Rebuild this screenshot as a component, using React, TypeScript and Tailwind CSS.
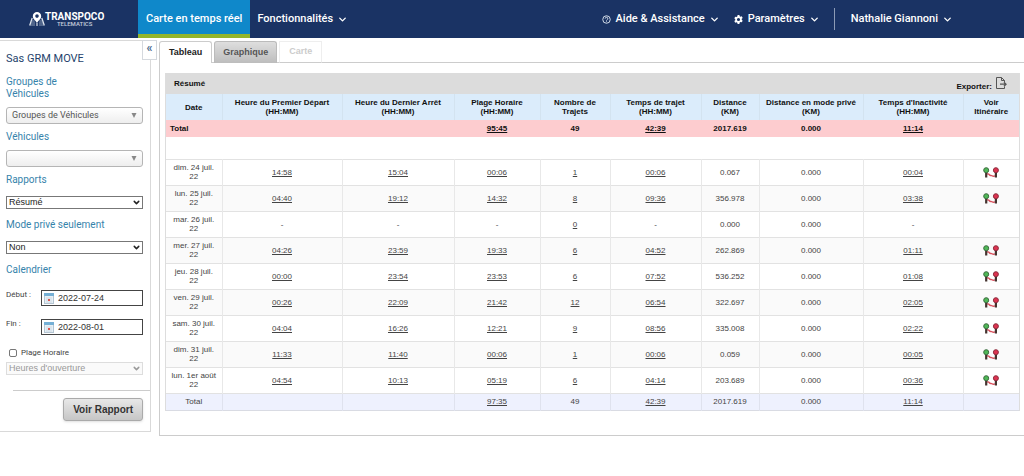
import { ReactNode, SelectHTMLAttributes, useState } from "react";
import { ChevronDown } from "lucide-react";

interface ReportRow {
  date: string;
  first: string;
  last: string;
  range: string;
  trips: string;
  driving: string;
  distance: string;
  privateKm: string;
  idle: string;
}

const columns = [
  { title: "Date", unit: "", width: "w-[56px]" },
  { title: "Heure du Premier Départ", unit: "(HH:MM)", width: "w-[120px]" },
  { title: "Heure du Dernier Arrêt", unit: "(HH:MM)", width: "w-[112px]" },
  { title: "Plage Horaire", unit: "(HH:MM)", width: "w-[86px]" },
  { title: "Nombre de", unit: "Trajets", width: "w-[70px]" },
  { title: "Temps de trajet", unit: "(HH:MM)", width: "w-[91px]" },
  { title: "Distance", unit: "(KM)", width: "w-[58px]" },
  { title: "Distance en mode privé", unit: "(KM)", width: "w-[104px]" },
  { title: "Temps d'Inactivité", unit: "(HH:MM)", width: "w-[100px]" },
  { title: "Voir", unit: "Itinéraire", width: "w-[56px]" },
];

const rows: ReportRow[] = [
  { date: "dim. 24 juil. 22", first: "14:58", last: "15:04", range: "00:06", trips: "1", driving: "00:06", distance: "0.067", privateKm: "0.000", idle: "00:04" },
  { date: "lun. 25 juil. 22", first: "04:40", last: "19:12", range: "14:32", trips: "8", driving: "09:36", distance: "356.978", privateKm: "0.000", idle: "03:38" },
  { date: "mar. 26 juil. 22", first: "-", last: "-", range: "-", trips: "0", driving: "-", distance: "0.000", privateKm: "0.000", idle: "-" },
  { date: "mer. 27 juil. 22", first: "04:26", last: "23:59", range: "19:33", trips: "6", driving: "04:52", distance: "262.869", privateKm: "0.000", idle: "01:11" },
  { date: "jeu. 28 juil. 22", first: "00:00", last: "23:54", range: "23:53", trips: "6", driving: "07:52", distance: "536.252", privateKm: "0.000", idle: "01:08" },
  { date: "ven. 29 juil. 22", first: "00:26", last: "22:09", range: "21:42", trips: "12", driving: "06:54", distance: "322.697", privateKm: "0.000", idle: "02:05" },
  { date: "sam. 30 juil. 22", first: "04:04", last: "16:26", range: "12:21", trips: "9", driving: "08:56", distance: "335.008", privateKm: "0.000", idle: "02:22" },
  { date: "dim. 31 juil. 22", first: "11:33", last: "11:40", range: "00:06", trips: "1", driving: "00:06", distance: "0.059", privateKm: "0.000", idle: "00:05" },
  { date: "lun. 1er août 22", first: "04:54", last: "10:13", range: "05:19", trips: "6", driving: "04:14", distance: "203.689", privateKm: "0.000", idle: "00:36" },
];

function Value({ children }: { children: string }) {
  if (children === "-") return <>-</>;
  return (
    <a href="#detail" className="underline">
      {children}
    </a>
  );
}

function RouteIcon() {
  return (
    <svg width="16" height="11" viewBox="0 0 16 11" className="mx-auto block" aria-hidden="true">
      <path d="M4 7c1.200-.4 2 .1 2.600 1s1.600 .1 2.400 .7 1.800 .8 3 .2" fill="none" stroke="#d9505d" strokeWidth="1.400" />
      <path d="M3.200 5.500v5M12.900 5.500v5" stroke="#44332f" strokeWidth="2.200" />
      <circle cx="3.200" cy="3.200" r="2.500" fill="#4fb857" stroke="#3c6b3f" strokeWidth="1" />
      <circle cx="12.900" cy="3.200" r="2.500" fill="#dc3350" stroke="#8c2b3b" strokeWidth="1" />
    </svg>
  );
}

function CalendarIcon() {
  return (
    <svg width="10" height="11" viewBox="0 0 10 11" className="shrink-0" aria-hidden="true">
      <rect x="0.500" y="0.500" width="9" height="10" fill="#e6eff5" stroke="#b4c5d2" />
      <path d="M0 0h10v3H0z" fill="#74afd5" />
      <path d="M2 5h6M2 7h6M2 9h6" stroke="#c9d6df" strokeWidth="0.800" />
      <path d="M4 6h2v2H4z" fill="#e0544c" />
    </svg>
  );
}

function Logo() {
  return (
    <a href="#accueil" className="flex items-center text-white" aria-label="Transpoco Telematics">
      <svg width="16" height="14" viewBox="0 0 16 14" aria-hidden="true">
        <path d="M3.200 6 .7 13.500M12.800 6l2.500 7.500" stroke="#dfe5ee" strokeWidth="1.300" fill="none" />
        <path d="M2.500 9h3.200M2 11h4M1.300 13h4.700M10.300 9h3.200M10 11h4M10 13h4.700" stroke="#b9c4d6" strokeWidth="0.700" />
        <path d="M8 11v3" stroke="#fff" strokeWidth="1" />
        <path
          d="M8 0a4.200 4.200 0 0 0-4.200 4.200C3.800 7 6.800 8.500 8 11c1.200-2.500 4.200-4 4.200-6.800A4.200 4.200 0 0 0 8 0Zm0 2.300a1.800 1.800 0 1 1 0 3.600 1.800 1.800 0 0 1 0-3.600Z"
          fill="#fff"
          fillRule="evenodd"
        />
      </svg>
      <span className="flex flex-col items-center">
        <span className="text-[10px] leading-[9px] font-bold">TRANSPOCO</span>
        <span className="text-[6px] leading-[5px] text-[#c5cedd]">TELEMATICS</span>
      </span>
    </a>
  );
}

function NavMenu({ icon, children }: { icon?: ReactNode; children: string }) {
  return (
    <button type="button" className="flex items-center whitespace-nowrap">
      {icon}
      {children}
      <ChevronDown size={11} strokeWidth={3} className="ml-1" />
    </button>
  );
}

function Header() {
  return (
    <header className="flex h-[38px] items-stretch bg-[#1a3364] text-[11px] font-medium text-white">
      <div className="flex w-[138px] items-center pl-[29px]">
        <Logo />
      </div>
      <nav className="flex flex-1 items-stretch">
        <a
          href="#carte"
          className="flex items-center border-b-4 border-[#93b52b] bg-[#0f88ca] px-2 pt-1 whitespace-nowrap"
        >
          Carte en temps réel
        </a>
        <div className="flex pl-[7px]">
          <NavMenu>Fonctionnalités</NavMenu>
        </div>
        <div className="ml-auto flex items-center gap-[14px] pr-[71px]">
          <NavMenu
            icon={
              <svg width="9" height="9" viewBox="0 0 24 24" fill="none" stroke="#dce4ef" strokeWidth="2.500" className="mr-[5px]" aria-hidden="true">
                <circle cx="12" cy="12" r="10" />
                <path d="M8.500 9.500a3.500 3.500 0 1 1 5 3.200c-1 .6-1.500 1-1.500 2.300M12 17v2" />
              </svg>
            }
          >
            Aide & Assistance
          </NavMenu>
          <NavMenu
            icon={
              <svg width="9" height="9" viewBox="0 0 20 20" className="mr-[5px]" aria-hidden="true">
                <path
                  d="M8 0h4l.6 2.800 2 1.100 2.700-.9 2 3.500-2.100 1.900v2.400l2.100 1.900-2 3.500-2.700-.9-2 1.100L12 20H8l-.6-2.800-2-1.100-2.700.9-2-3.500 2.100-1.900V9.200L.7 7.300l2-3.500 2.700.9 2-1.100L8 0Zm2 6.500a3.500 3.500 0 1 0 0 7 3.500 3.500 0 0 0 0-7Z"
                  fill="#fff"
                  fillRule="evenodd"
                />
              </svg>
            }
          >
            Paramètres
          </NavMenu>
          <div className="flex items-center gap-4">
            <span className="h-[22px] w-px bg-[#8c9bb5]" />
            <NavMenu>Nathalie Giannoni</NavMenu>
          </div>
        </div>
      </nav>
    </header>
  );
}

// Rounded gradient drop-down with a small solid arrow
function FancySelect(props: SelectHTMLAttributes<HTMLSelectElement>) {
  return (
    <div className="relative mt-[7px]">
      <select
        {...props}
        className="block h-[17px] w-full appearance-none rounded-[3px] border border-[#b5b5b5] bg-linear-to-b from-white to-[#eeeeee] pl-[5px] text-[9px] leading-[15px] text-[#555]"
      />
      <svg width="6" height="5" viewBox="0 0 6 5" className="pointer-events-none absolute top-[6px] right-[6px]" aria-hidden="true">
        <path d="M.5 0h5L3 5z" fill="#888" />
      </svg>
    </div>
  );
}

function PlainSelect(props: SelectHTMLAttributes<HTMLSelectElement>) {
  return (
    <div className={props.disabled ? "relative text-[#999]" : "relative text-[#222]"}>
      <select
        {...props}
        className="block h-[13px] w-full appearance-none border border-[#777] bg-white pl-[2px] font-['Liberation_Sans',Arial,sans-serif] text-[9px] leading-[11px] disabled:border-[#ddd] disabled:bg-[#fafafa]"
      />
      <ChevronDown size={9} strokeWidth={4} className="pointer-events-none absolute top-[2px] right-[2px]" />
    </div>
  );
}

function FieldLabel({ htmlFor, children }: { htmlFor: string; children: ReactNode }) {
  return (
    <label htmlFor={htmlFor} className="block text-[10px] leading-3 text-[#3683ab]">
      {children}
    </label>
  );
}

function DateField({ id, label, initial }: { id: string; label: string; initial: string }) {
  const [value, setValue] = useState(initial);
  return (
    <div className="flex items-start">
      <label htmlFor={id} className="w-[35px] shrink-0 text-[8px] leading-[10px] text-[#444]">
        {label}
      </label>
      <div className="flex h-4 min-w-0 flex-1 items-center gap-1 border border-[#444] bg-white px-[2px]">
        <CalendarIcon />
        <input
          id={id}
          value={value}
          onChange={(e) => setValue(e.target.value)}
          className="w-full min-w-0 font-['Liberation_Sans',Arial,sans-serif] text-[9px] leading-[14px] text-[#333] outline-none"
        />
      </div>
    </div>
  );
}

function Sidebar() {
  return (
    <aside className="relative w-[151px] shrink-0 self-start border-t border-r border-b border-[#d9d9d9] pb-[10px]">
      <button
        type="button"
        aria-label="Réduire le panneau"
        className="absolute -top-px -right-[7px] flex h-5 w-[15px] items-center justify-center border border-[#d5d9de] bg-white pb-1 text-[12px] leading-none font-bold text-[#4b6b8f]"
      >
        «
      </button>
      <div className="pt-3 pr-[7px] pl-[6px]">
        <h1 className="text-[11px] leading-3 text-[#26436c]">Sas GRM MOVE</h1>

        <div className="mt-[11px]">
          <FieldLabel htmlFor="groups">
            Groupes de
            <br />
            Véhicules
          </FieldLabel>
          <FancySelect id="groups">
            <option>Groupes de Véhicules</option>
          </FancySelect>
        </div>

        <div className="mt-[7px]">
          <FieldLabel htmlFor="vehicles">Véhicules</FieldLabel>
          <FancySelect id="vehicles">
            <option></option>
          </FancySelect>
        </div>

        <div className="mt-[7px] flex flex-col gap-[10px]">
          <FieldLabel htmlFor="report">Rapports</FieldLabel>
          <PlainSelect id="report">
            <option>Résumé</option>
          </PlainSelect>
          <FieldLabel htmlFor="private">Mode privé seulement</FieldLabel>
          <PlainSelect id="private">
            <option>Non</option>
            <option>Oui</option>
          </PlainSelect>
          <h2 className="text-[10px] leading-3 text-[#3683ab]">Calendrier</h2>
        </div>

        <div className="mt-[14px] flex flex-col gap-[13px]">
          <DateField id="start" label="Début :" initial="2022-07-24" />
          <DateField id="end" label="Fin :" initial="2022-08-01" />
        </div>

        <div className="mt-[13px] mb-1 flex items-center pl-[3px]">
          <input
            id="hours"
            type="checkbox"
            className="h-2 w-2 appearance-none rounded-[2px] border border-[#777] bg-white checked:bg-[#0f88ca]"
          />
          <label htmlFor="hours" className="pl-1 text-[8px] leading-[10px] text-[#444]">
            Plage Horaire
          </label>
        </div>
        <PlainSelect aria-label="Plage Horaire" disabled>
          <option>Heures d'ouverture</option>
        </PlainSelect>
      </div>

      <div className="mt-[15px] ml-[13px] flex justify-end border-t border-[#ccc] pt-[7px] pr-[7px]">
        <button
          type="button"
          className="h-[23px] rounded-[3px] border border-[#aaa] bg-linear-to-b from-[#e8e8e8] to-[#c6c6c6] px-[9px] font-['Liberation_Sans',Arial,sans-serif] text-[10px] font-bold text-[#333] shadow-sm"
        >
          Voir Rapport
        </button>
      </div>
    </aside>
  );
}

function Tabs() {
  return (
    <div role="tablist" className="flex h-[22px] font-['Liberation_Sans',Arial,sans-serif] text-[9px] font-bold">
      <button role="tab" aria-selected="true" className="rounded-t-[3px] border border-b-0 border-[#ccc] bg-white px-[9px] text-[#222]">
        Tableau
      </button>
      <span className="w-[2px] border-b border-[#ccc]" />
      <button
        role="tab"
        aria-selected="false"
        className="rounded-t-[3px] border border-b-0 border-[#bbb] bg-linear-to-b from-[#dedede] to-[#bdbdbd] px-2 text-[#555]"
      >
        Graphique
      </button>
      <span className="w-[2px] border-b border-[#ccc]" />
      <button role="tab" aria-selected="false" disabled className="border border-[#eee] border-b-[#ccc] px-[9px] text-[#ccc]">
        Carte
      </button>
      <span className="flex-1 border-b border-[#ccc]" />
    </div>
  );
}

function ReportTable() {
  return (
    <div className="mr-1 border-r border-l border-[#ddd]">
      <div className="flex h-[21px] items-center justify-between bg-[#dcdcdc] pr-3 pl-2 font-bold">
        <span>Résumé</span>
        <button type="button" className="flex items-end gap-1">
          Exporter:
          <svg width="11" height="12" viewBox="0 0 11 12" className="mb-[2px]" fill="none" stroke="#555" strokeWidth="1" aria-hidden="true">
            <path d="M8.500 5V3.500l-3-3h-5v11h8V9.500" />
            <path d="M5.500 .5v3h3" />
            <path d="M4 7.200h5.500M8 5.200l2 2-2 2" strokeWidth="1.300" />
          </svg>
        </button>
      </div>
      <table className="w-full table-fixed border-collapse text-center">
        <thead>
          <tr className="h-[26px] bg-[#dbecfb]">
            {columns.map((col) => (
              <th key={col.title} className={`${col.width} border-x border-[#d3e3f0] p-0 font-bold whitespace-nowrap first:border-l-0 last:border-r-0`}>
                {col.title}
                {col.unit && (
                  <>
                    <br />
                    {col.unit}
                  </>
                )}
              </th>
            ))}
          </tr>
        </thead>
        <tbody>
          <tr className="h-[17px] bg-[#fdcccf] font-bold">
            <td className="pl-1 text-left">Total</td>
            <td />
            <td />
            <td><Value>95:45</Value></td>
            <td>49</td>
            <td><Value>42:39</Value></td>
            <td>2017.619</td>
            <td>0.000</td>
            <td><Value>11:14</Value></td>
            <td />
          </tr>
          <tr className="h-[22px]">
            <td colSpan={10} />
          </tr>
          {rows.map((row) => (
            <tr
              key={row.date}
              className="h-[26px] border-y border-[#e2e2e2] text-[#444] even:bg-[#fafafa] [&>td+td]:border-l [&>td+td]:border-[#e8e8e8]"
            >
              <td className="px-[5px]">{row.date}</td>
              <td><Value>{row.first}</Value></td>
              <td><Value>{row.last}</Value></td>
              <td><Value>{row.range}</Value></td>
              <td><Value>{row.trips}</Value></td>
              <td><Value>{row.driving}</Value></td>
              <td>{row.distance}</td>
              <td>{row.privateKm}</td>
              <td><Value>{row.idle}</Value></td>
              <td>
                {row.first !== "-" && (
                  <a href="#itineraire" aria-label="Voir Itinéraire">
                    <RouteIcon />
                  </a>
                )}
              </td>
            </tr>
          ))}
        </tbody>
        <tfoot>
          <tr className="h-[17px] border-y border-[#d9dbe3] bg-[#eef1fe] text-[#444] [&>td+td]:border-l [&>td+td]:border-[#dfe2ee]">
            <td>Total</td>
            <td />
            <td />
            <td><Value>97:35</Value></td>
            <td>49</td>
            <td><Value>42:39</Value></td>
            <td>2017.619</td>
            <td>0.000</td>
            <td><Value>11:14</Value></td>
            <td />
          </tr>
        </tfoot>
      </table>
    </div>
  );
}

export default function App() {
  return (
    <div className="min-h-screen bg-white font-[Roboto,Arial,sans-serif]">
      <Header />
      <div className="flex items-start pt-[2px]">
        <Sidebar />
        <main className="ml-2 min-w-0 flex-1 pt-px">
          <Tabs />
          <div className="border-b border-l border-[#ccc] pt-[10px] pb-6 pl-[5px] font-['Liberation_Sans',Arial,sans-serif] text-[8px] leading-[9px] text-[#111]">
            <ReportTable />
          </div>
        </main>
      </div>
    </div>
  );
}
